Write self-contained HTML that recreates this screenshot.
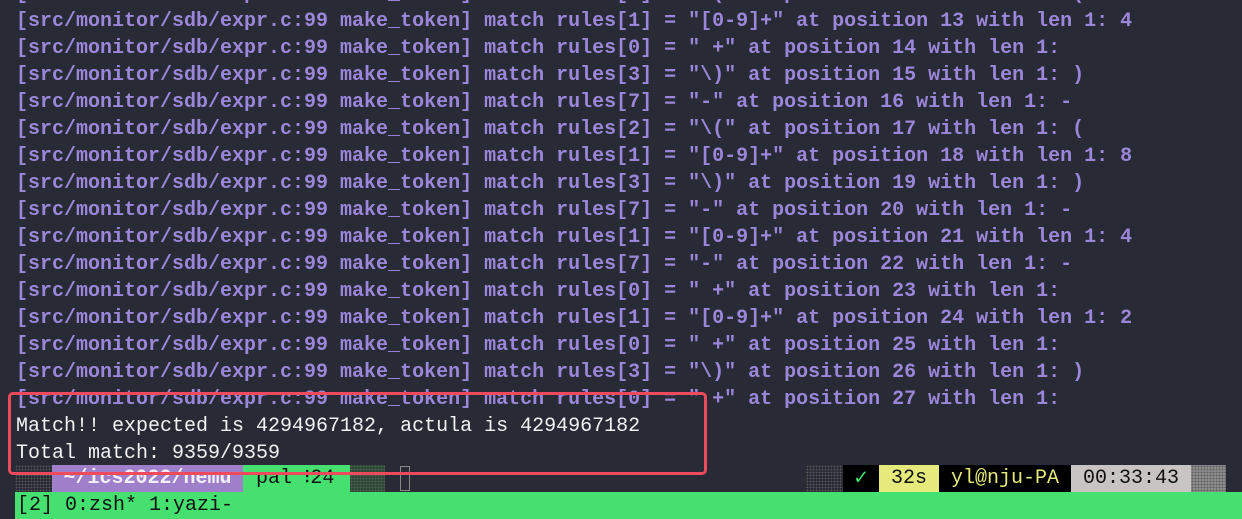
<!DOCTYPE html>
<html><head><meta charset="utf-8"><style>
body{margin:0;width:1242px;height:519px;overflow:hidden;background:#282a36;font-family:"Liberation Mono","DejaVu Sans Mono",monospace;font-size:20px;}
.l{position:absolute;left:16px;height:27px;line-height:27px;white-space:pre;color:#9b87d9;font-weight:bold;}
.w{color:#f2f2f2;font-weight:normal;}
.bar{position:absolute;top:465px;height:27px;line-height:27px;white-space:pre;}
.dots{background-image:radial-gradient(#5a5a5a 0.7px,transparent 1px);background-size:3px 3px;}
</style></head><body>
<div class="l" style="top:-19px">[src/monitor/sdb/expr.c:99 make_token] match rules[2] = "\(" at position 12 with len 1: (</div>
<div class="l" style="top:8px">[src/monitor/sdb/expr.c:99 make_token] match rules[1] = "[0-9]+" at position 13 with len 1: 4</div>
<div class="l" style="top:35px">[src/monitor/sdb/expr.c:99 make_token] match rules[0] = " +" at position 14 with len 1:</div>
<div class="l" style="top:62px">[src/monitor/sdb/expr.c:99 make_token] match rules[3] = "\)" at position 15 with len 1: )</div>
<div class="l" style="top:89px">[src/monitor/sdb/expr.c:99 make_token] match rules[7] = "-" at position 16 with len 1: -</div>
<div class="l" style="top:116px">[src/monitor/sdb/expr.c:99 make_token] match rules[2] = "\(" at position 17 with len 1: (</div>
<div class="l" style="top:143px">[src/monitor/sdb/expr.c:99 make_token] match rules[1] = "[0-9]+" at position 18 with len 1: 8</div>
<div class="l" style="top:170px">[src/monitor/sdb/expr.c:99 make_token] match rules[3] = "\)" at position 19 with len 1: )</div>
<div class="l" style="top:197px">[src/monitor/sdb/expr.c:99 make_token] match rules[7] = "-" at position 20 with len 1: -</div>
<div class="l" style="top:224px">[src/monitor/sdb/expr.c:99 make_token] match rules[1] = "[0-9]+" at position 21 with len 1: 4</div>
<div class="l" style="top:251px">[src/monitor/sdb/expr.c:99 make_token] match rules[7] = "-" at position 22 with len 1: -</div>
<div class="l" style="top:278px">[src/monitor/sdb/expr.c:99 make_token] match rules[0] = " +" at position 23 with len 1:</div>
<div class="l" style="top:305px">[src/monitor/sdb/expr.c:99 make_token] match rules[1] = "[0-9]+" at position 24 with len 1: 2</div>
<div class="l" style="top:332px">[src/monitor/sdb/expr.c:99 make_token] match rules[0] = " +" at position 25 with len 1:</div>
<div class="l" style="top:359px">[src/monitor/sdb/expr.c:99 make_token] match rules[3] = "\)" at position 26 with len 1: )</div>
<div class="l" style="top:386px">[src/monitor/sdb/expr.c:99 make_token] match rules[0] = " +" at position 27 with len 1:</div>
<div class="l w" style="top:413px">Match!! expected is 4294967182, actula is 4294967182</div>
<div class="l w" style="top:440px">Total match: 9359/9359</div>

<div class="bar dots" style="left:15px;width:37px"></div>
<div class="bar" style="left:52px;width:191px;background:#9f7fc9;color:#f4f0fa;font-weight:bold;text-align:center">~/ics2022/nemu</div>
<div class="bar" style="left:243px;width:107px;background:#45e070;color:#111;padding-left:13px;box-sizing:border-box">pal ⁝24</div>
<div class="bar dots" style="left:350px;width:35px;background-color:#2a4a34"></div>
<div style="position:absolute;left:400px;top:466px;width:8px;height:23px;border:1px solid #888"></div>

<div class="bar dots" style="left:806px;width:37px"></div>
<div class="bar" style="left:843px;width:36px;background:#000;color:#45e070;text-align:center;font-weight:bold;font-size:22px">✓</div>
<div class="bar" style="left:879px;width:60px;background:#e6ea7c;color:#111;text-align:center">32s</div>
<div class="bar" style="left:939px;width:132px;background:#000;color:#e6ea7c;text-align:center">yl@nju-PA</div>
<div class="bar" style="left:1071px;width:120px;background:#c8c4c4;color:#111;text-align:center">00:33:43</div>
<div class="bar dots" style="left:1191px;width:35px;background-color:#8a8a8a"></div>

<div style="position:absolute;left:15px;top:492px;width:1227px;height:27px;background:#45e070;color:#111;line-height:27px;white-space:pre;padding-left:2px">[2] 0:zsh* 1:yazi-</div>

<div style="position:absolute;left:8px;top:392px;width:693px;height:77px;border:3px solid #ee4a5e;border-radius:5px"></div>
</body></html>
